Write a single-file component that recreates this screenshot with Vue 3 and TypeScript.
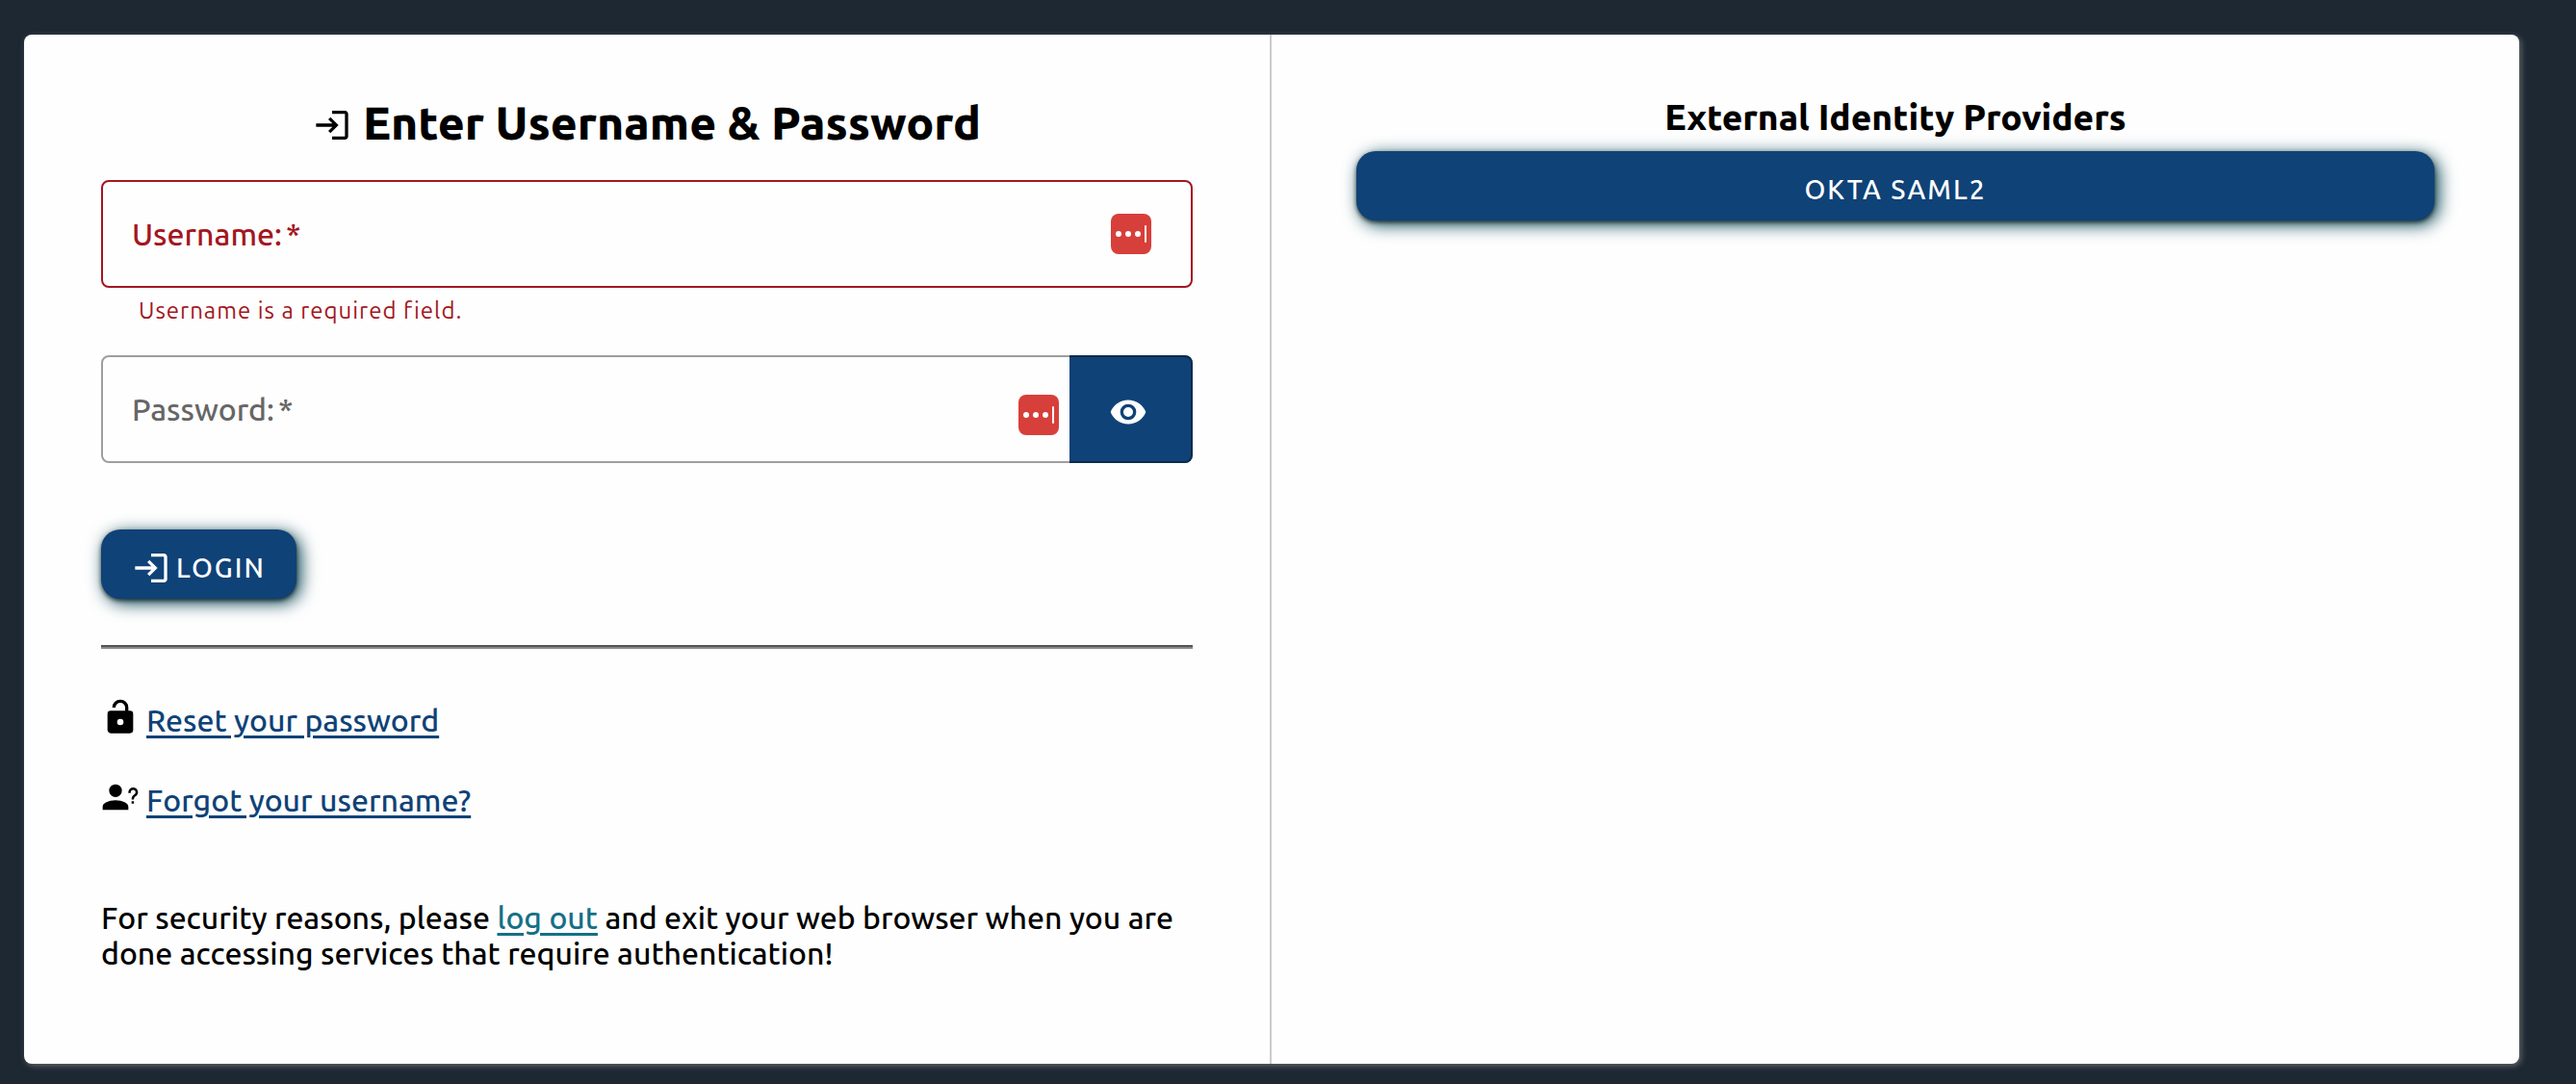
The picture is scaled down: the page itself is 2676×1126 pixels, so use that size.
<script setup lang="ts">
import { ref } from 'vue'

const username = ref('')
const password = ref('')
const showPassword = ref(false)

const icons = {
  login:
    'M11 7L9.6 8.4L12.2 11H2V13H12.2L9.6 15.6L11 17L16 12L11 7M20 19H12V21H20C21.1 21 22 20.1 22 19V5C22 3.9 21.1 3 20 3H12V5H20V19Z',
  unlock:
    'M18,8A2,2 0 0,1 20,10V20A2,2 0 0,1 18,22H6C4.89,22 4,21.1 4,20V10A2,2 0 0,1 6,8H15V6A3,3 0 0,0 12,3A3,3 0 0,0 9,6H7A5,5 0 0,1 12,1A5,5 0 0,1 17,6V8H18M12,17A2,2 0 0,0 14,15A2,2 0 0,0 12,13A2,2 0 0,0 10,15A2,2 0 0,0 12,17Z',
  account:
    'M13,8A4,4 0 0,1 9,12A4,4 0 0,1 5,8A4,4 0 0,1 9,4A4,4 0 0,1 13,8M17,18V20H1V18C1,15.79 4.58,14 9,14C13.42,14 17,15.79 17,18M20.5,14.5V16H19V14.5H20.5M18.5,9.5H17V9A3,3 0 0,1 20,6C21.66,6 23,7.34 23,9C23,9.97 22.5,10.88 21.71,11.41L21.41,11.6C20.84,12 20.5,12.61 20.5,13.3V13.5H19V13.3C19,12.11 19.6,11 20.59,10.35L20.88,10.16C21.27,9.9 21.5,9.47 21.5,9A1.5,1.5 0 0,0 20,7.5A1.5,1.5 0 0,0 18.5,9V9.5Z',
  eye: 'M12,9A3,3 0 0,0 9,12A3,3 0 0,0 12,15A3,3 0 0,0 15,12A3,3 0 0,0 12,9M12,17A5,5 0 0,1 7,12A5,5 0 0,1 12,7A5,5 0 0,1 17,12A5,5 0 0,1 12,17M12,4.5C7,4.5 2.73,7.61 1,12C2.73,16.39 7,19.5 12,19.5C17,19.5 21.27,16.39 23,12C21.27,7.61 17,4.5 12,4.5Z',
}

const links = [
  { icon: icons.unlock, text: 'Reset your password' },
  { icon: icons.account, text: 'Forgot your username?' },
]
</script>

<template>
  <div class="page">
    <main class="card">
      <section class="login">
        <h2 class="title">
          <svg class="icon" viewBox="0 0 24 24" aria-hidden="true"><path :d="icons.login" /></svg>
          <span>Enter Username &amp; Password</span>
        </h2>

        <form @submit.prevent>
          <div class="field invalid">
            <input id="username" v-model="username" type="text" autocomplete="username" aria-describedby="username-error" />
            <label v-show="!username" for="username">Username:<span class="required">*</span></label>
            <svg class="manager" viewBox="0 0 42 42" aria-hidden="true">
              <rect width="42" height="42" rx="8" fill="#d73f3a" />
              <circle cx="8" cy="21" r="3" /><circle cx="18" cy="21" r="3" /><circle cx="28" cy="21" r="3" />
              <rect x="35" y="12" width="2" height="18" rx="1" />
            </svg>
          </div>
          <p id="username-error" class="error">Username is a required field.</p>

          <div class="field with-toggle">
            <input id="password" v-model="password" :type="showPassword ? 'text' : 'password'" autocomplete="current-password" />
            <label v-show="!password" for="password">Password:<span class="required">*</span></label>
            <svg class="manager" viewBox="0 0 42 42" aria-hidden="true">
              <rect width="42" height="42" rx="8" fill="#d73f3a" />
              <circle cx="8" cy="21" r="3" /><circle cx="18" cy="21" r="3" /><circle cx="28" cy="21" r="3" />
              <rect x="35" y="12" width="2" height="18" rx="1" />
            </svg>
            <button class="toggle" type="button" aria-label="Toggle password" @click="showPassword = !showPassword">
              <svg class="icon" viewBox="0 0 24 24" aria-hidden="true"><path :d="icons.eye" /></svg>
            </button>
          </div>

          <button class="button submit" type="submit">
            <svg class="icon" viewBox="0 0 24 24" aria-hidden="true"><path :d="icons.login" /></svg>
            <span>LOGIN</span>
          </button>
        </form>

        <hr />

        <ul class="links">
          <li v-for="link in links" :key="link.text">
            <svg class="icon" viewBox="0 0 24 24" aria-hidden="true"><path :d="link.icon" /></svg>
            <a href="#">{{ link.text }}</a>
          </li>
        </ul>

        <p class="notice">
          For security reasons, please <a href="#">log out</a> and exit your web browser when you are done accessing
          services that require authentication!
        </p>
      </section>

      <section class="providers">
        <h3>External Identity Providers</h3>
        <button class="button" type="button">OKTA SAML2</button>
      </section>
    </main>
  </div>
</template>

<style>
body {
  margin: 0;
  background: #1d2833;
}
</style>

<style scoped>
.page {
  box-sizing: border-box;
  display: flex;
  min-height: 100vh;
  padding: 36px 59px 21px 25px;
  background: #1d2833;
  color: #000;
  font-family: Ubuntu, "Noto Sans", sans-serif;
  font-size: 32px;
  font-weight: 500;
  line-height: 37px;
}

.card {
  display: flex;
  flex: 1;
  border-radius: 8px;
  background: #fefefe;
  box-shadow: 2px 2px 6px #666;
}

.login,
.providers {
  box-sizing: border-box;
  width: 50%;
}

.login {
  padding: 64px 80px 84px;
  border-right: 2px solid #ccc;
}

.providers {
  padding: 64px 88px;
}

.icon {
  flex: none;
  width: 40px;
  height: 40px;
  fill: currentColor;
}

.title {
  display: flex;
  align-items: center;
  justify-content: center;
  gap: 12px;
  margin: 0 0 32px;
  font-size: 48px;
  font-weight: 800;
  line-height: 55px;
}

.title .icon {
  margin-top: 4px;
}

.field {
  position: relative;
  display: flex;
  box-sizing: border-box;
  height: 112px;
  border: 2px solid #9e9e9e;
  border-radius: 8px;
  color: #666;
}

.field input {
  flex: 1;
  min-width: 0;
  padding: 0 100px 0 30px;
  border: 0;
  border-radius: 8px;
  outline: 0;
  background: transparent;
  color: #000;
  font: inherit;
}

.field label {
  position: absolute;
  top: 36px;
  left: 30px;
  pointer-events: none;
}

.required {
  margin-left: 4px;
}

.invalid,
.error {
  border-color: #a31621;
  color: #a31621;
}

.manager {
  position: absolute;
  top: 33px;
  right: 41px;
  width: 42px;
  height: 42px;
  fill: #fff;
}

.with-toggle .manager {
  top: 39px;
  right: 137px;
}

.toggle {
  display: flex;
  align-items: center;
  justify-content: center;
  box-sizing: border-box;
  width: 128px;
  margin: -2px -2px -2px 0;
  padding: 6px 4px 0 0;
  border: 2px solid #0b2b4c;
  border-left: 0;
  border-radius: 0 8px 8px 0;
  background: #0f4277;
  color: #fff;
}

.error {
  margin: 9px 0 31px 39px;
  font-size: 24px;
  font-weight: 400;
  line-height: 30px;
  letter-spacing: 1px;
}

.button {
  display: flex;
  align-items: center;
  justify-content: center;
  box-sizing: border-box;
  height: 72px;
  padding: 8px 32px 0;
  border: 0;
  border-radius: 20px;
  background: #0f4277;
  box-shadow: 0 2px 4px rgb(0 0 0 / 60%), 4px 4px 18px #00404f;
  color: #fff;
  font: 500 28px/32px Ubuntu, "Noto Sans", sans-serif;
  letter-spacing: 2px;
}

.submit {
  gap: 6px;
  margin-top: 69px;
}

hr {
  margin: 48px 0 51px;
  border: 2px solid;
  border-color: #555 #888 #888 #555;
  border-width: 2px 0;
}

.links {
  display: flex;
  flex-direction: column;
  gap: 43px;
  margin: 0;
  padding: 0;
  list-style: none;
}

.links li {
  display: flex;
  align-items: flex-start;
  gap: 7px;
  height: 40px;
}

.links a {
  margin-top: 5px;
  color: #0f4277;
}

a {
  text-decoration-thickness: 3px;
  text-underline-offset: 4px;
}

.notice {
  margin: 87px 0 0;
}

.notice a {
  color: #166f86;
}

.providers h3 {
  margin: 0 0 14px;
  font-size: 37px;
  font-weight: 800;
  line-height: 43px;
  text-align: center;
}

.providers .button {
  width: 100%;
}
</style>
